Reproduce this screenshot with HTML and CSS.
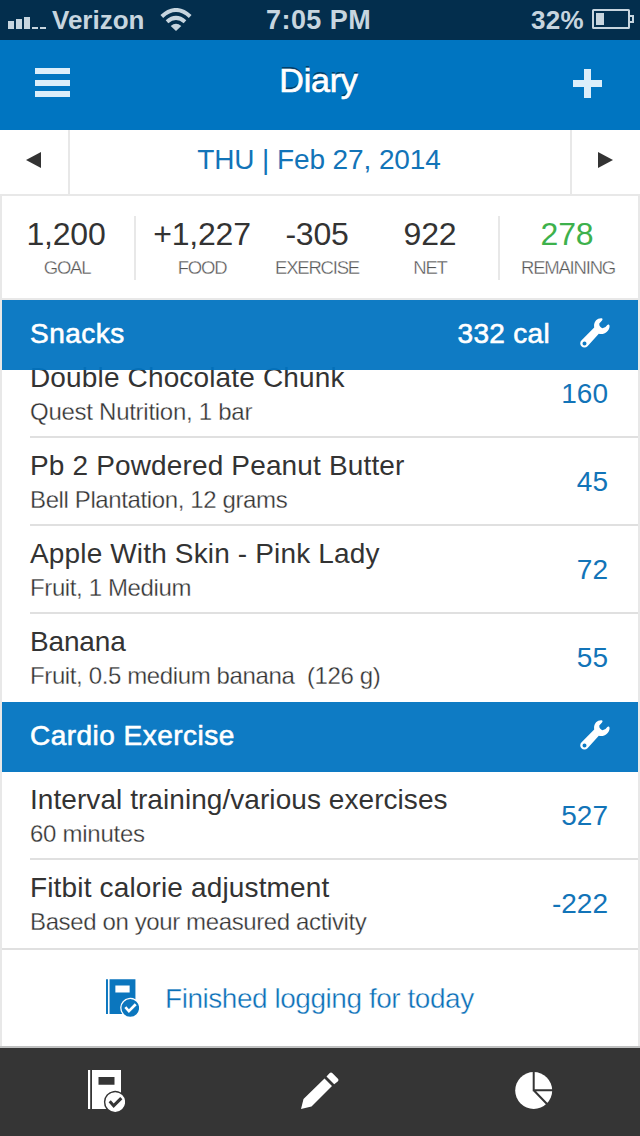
FILE: index.html
```html
<!DOCTYPE html>
<html lang="en">
<head>
<meta charset="utf-8">
<title>Diary</title>
<link rel="stylesheet" href="styles.css">
</head>
<body>
<svg class="defs" width="0" height="0">
  <defs>
    <symbol id="wrench" viewBox="0 0 30 30">
      <path fill-rule="evenodd" d="M21.500.3C17 0 13.300 4 14.200 9.500L1.600 22.300A4.210 4.210 0 1 0 7.500 28.300L18.800 15.700C23.800 17.200 29.600 13.500 29.600 8C29.600 6.300 28.200 5.900 27.300 7Q25.500 10.200 22.500 10.300Q19 9 19.300 5.600L21.800 2.800C22.800 1.800 22.800.4 21.500.3ZM4.500 23.400a2 2 0 1 1 0 4a2 2 0 1 1 0-4Z"/>
    </symbol>
    <symbol id="diary" viewBox="0 0 37 42">
      <path fill-rule="evenodd" d="M0 0H2.200V39H0ZM4 0H33V22.400A11.300 11.300 0 0 0 18.250 39H4ZM10.500 7V14.700H26.500V7Z"/>
      <path fill-rule="evenodd" d="M27.200 22.200a9.900 9.900 0 1 1 0 19.800a9.900 9.900 0 1 1 0-19.800ZM20.600 32.300L25.600 37.900L34.400 29.200L32.200 27L25.700 33.500L22.800 30.200Z"/>
    </symbol>
  </defs>
</svg>

<div class="status">
  <svg class="signal" width="38" height="13"><path d="M0 5h6v8H0zM8 3h6v10H8zM16 1h6v12h-6zM24 11h6v2h-6zM32 11h6v2h-6z"/></svg>
  <span class="carrier">Verizon</span>
  <svg class="wifi" width="32" height="24" viewBox="0 0 32 24"><path class="arc" d="M1.800 8.500Q16-4.500 30.200 8.500M7 13.700Q16 6 25 13.700"/><path d="M10.700 18Q16 13.300 21.300 18L16 23Z"/></svg>
  <span class="clock">7:05 PM</span>
  <span class="percent">32%</span>
  <svg class="battery" width="42" height="20"><path fill-rule="evenodd" d="M1.500 0H36.500Q38 0 38 1.500V6H42V14H38V18.500Q38 20 36.500 20H1.500Q0 20 0 18.500V1.500Q0 0 1.500 0ZM2 2V18H36V2ZM38 8V12H40V8ZM4 4H12V16H4Z"/></svg>
</div>

<header class="topbar">
  <svg class="menu" width="35" height="29"><path d="M0 0h35v6H0zM0 12h35v6H0zM0 23h35v6H0z"/></svg>
  <h1 class="title">Diary</h1>
  <svg class="add" width="29" height="29"><path d="M11 0h7v11h11v7H18v11h-7V18H0v-7h11z"/></svg>
</header>

<div class="date">
  <div class="step prev"><svg width="15" height="16"><path d="M0 8L15 0V16Z"/></svg></div>
  <div class="day"><span>THU | Feb 27, 2014</span></div>
  <div class="step next"><svg width="15" height="16"><path d="M15 8L0 0V16Z"/></svg></div>
</div>

<main class="page">
  <section class="summary">
    <div class="stat goal"><b>1,200</b><small>GOAL</small></div>
    <div class="stat food"><b>+1,227</b><small>FOOD</small></div>
    <div class="stat exercise"><b>-305</b><small>EXERCISE</small></div>
    <div class="stat net"><b>922</b><small>NET</small></div>
    <div class="stat remaining"><b>278</b><small>REMAINING</small></div>
  </section>

  <div class="section pinned"><h2>Snacks</h2><span class="total">332 cal</span><svg width="30" height="30"><use href="#wrench"/></svg></div>
  <ul class="list scrolled">
    <li><div><p class="name">Double Chocolate Chunk</p><p class="info loose">Quest Nutrition, 1 bar</p></div><span class="cal">160</span></li>
    <li><div><p class="name">Pb 2 Powdered Peanut Butter</p><p class="info">Bell Plantation, 12 grams</p></div><span class="cal">45</span></li>
    <li><div><p class="name">Apple With Skin - Pink Lady</p><p class="info">Fruit, 1 Medium</p></div><span class="cal">72</span></li>
    <li><div><p class="name tight">Banana</p><p class="info">Fruit, 0.5 medium banana&nbsp; (126 g)</p></div><span class="cal">55</span></li>
  </ul>

  <div class="section"><h2>Cardio Exercise</h2><svg width="30" height="30"><use href="#wrench"/></svg></div>
  <ul class="list">
    <li><div><p class="name even">Interval training/various exercises</p><p class="info loose">60 minutes</p></div><span class="cal">527</span></li>
    <li><div><p class="name">Fitbit calorie adjustment</p><p class="info">Based on your measured activity</p></div><span class="cal">-222</span></li>
  </ul>

  <div class="finish"><svg width="33" height="38"><use href="#diary"/></svg><span>Finished logging for today</span></div>
</main>

<nav class="tabs">
  <svg width="37" height="42"><use href="#diary"/></svg>
  <svg class="pencil" width="38" height="38" viewBox="0 0 38 38"><path d="M0 37L2.500 27L23.500 6.500L31 14L10.500 34.500ZM25.500 4.500L28.500 1.200Q30-.3 31.500 1.200L36.700 6.400Q38.200 7.900 36.700 9.400L33.200 12.300Z"/></svg>
  <svg class="pie" width="38" height="38" viewBox="0 0 38 38"><circle cx="18.700" cy="18.500" r="18.500"/><path class="cut" d="M18.700 0V18.200H38M18.700 18.200L32 32"/></svg>
</nav>
</body>
</html>
```
FILE: styles.css
```css
* { box-sizing: border-box; margin: 0; padding: 0; }
body { width: 640px; height: 1136px; overflow: hidden; display: flex; flex-direction: column; background: #fff; color: #333; font-family: "Liberation Sans", Arial, sans-serif; }
svg { display: block; flex: none; }
.defs { position: absolute; }
span, h1, h2, b, small, p { white-space: nowrap; }

.status { height: 40px; flex: none; display: flex; align-items: flex-start; padding-left: 8px; background: #032e4d; color: #c7d5df; fill: #c7d5df; font-size: 26px; font-weight: bold; line-height: 40px; }
.signal { margin-top: 16px; }
.carrier { width: 92px; margin-left: 6px; }
.wifi { margin: 8px 0 0 16px; }
.arc { fill: none; stroke: #c7d5df; stroke-width: 4; }
.clock { width: 105px; margin-left: 74px; font-size: 27px; letter-spacing: .45px; }
.percent { width: 53px; margin-left: 160px; letter-spacing: .3px; }
.battery { margin: 9px 0 0 8px; }

.topbar { height: 90px; flex: none; display: flex; justify-content: space-between; padding: 0 38px 0 35px; background: #0075c1; fill: #dceefa; }
.menu { margin-top: 28px; }
.add { margin-top: 29px; }
.title { margin-right: 6px; color: #fff; font-size: 34px; font-weight: 400; line-height: 80px; letter-spacing: -.2px; text-shadow: 0 -2px 0 #023f69; -webkit-text-stroke: .7px #fff; }

.date { height: 66px; flex: none; display: flex; border-bottom: 2px solid #e8e8e8; color: #1274b8; fill: #333; font-size: 28px; letter-spacing: -.1px; }
.step { width: 70px; padding-top: 22px; }
.prev { border-right: 2px solid #e8e8e8; padding-left: 26px; }
.next { border-left: 2px solid #e8e8e8; padding-left: 26px; }
.day { flex: 1; padding-right: 2px; text-align: center; line-height: 60px; }

.page { flex: none; height: 850px; border: solid #e8e8e8; border-width: 0 2px; }
.summary { height: 104px; display: flex; border-bottom: 2px solid #e8e8e8; padding: 20px 0; }
.stat { height: 64px; display: flex; flex-direction: column; align-items: center; }
.stat b { font-size: 32px; font-weight: 400; line-height: 36px; letter-spacing: -.2px; }
.stat small { font-size: 18.5px; line-height: 32px; letter-spacing: -1.2px; color: #555; -webkit-text-stroke: .35px #fff; }
.goal { width: 134px; padding-right: 2px; border-right: 2px solid #e8e8e8; }
.goal b { margin-left: -2px; }
.food { width: 132px; }
.exercise { width: 98px; }
.net { width: 134px; padding-right: 4px; border-right: 2px solid #e8e8e8; }
.remaining { width: 136px; }
.remaining b { color: #3db14c; margin-right: 2px; }

.section { height: 70px; display: flex; padding: 0 28px; background: #0e7bc4; color: #fff; fill: #fff; font-size: 28px; line-height: 68px; letter-spacing: .47px; -webkit-text-stroke: .6px #fff; }
.section svg { margin: 18px 0 0 auto; -webkit-text-stroke: 0; }
.section h2 { font-size: 28px; font-weight: 400; }
.pinned { position: relative; z-index: 1; background: rgba(2, 116, 193, .95); }
.total { margin-left: auto; letter-spacing: .3px; }
.section .total + svg { margin-left: 30px; }

.list { list-style: none; padding-left: 28px; }
.scrolled { margin-top: -20px; }
.list li { height: 88px; display: flex; justify-content: space-between; padding: 10px 30px 0 0; border-bottom: 2px solid #e0e0e0; }
.list li:last-child { border-bottom: 0; }
.name { padding-top: 1px; font-size: 28px; line-height: 34px; letter-spacing: .15px; }
.tight { letter-spacing: -.15px; }
.even { letter-spacing: .06px; }
.info { margin-top: 1px; font-size: 24px; line-height: 32px; letter-spacing: -.38px; color: #333; -webkit-text-stroke: .3px #fff; }
.loose { letter-spacing: -.27px; }
.cal { color: #1274b8; font-size: 28px; line-height: 68px; }

.finish { height: 98px; display: flex; padding: 29px 0 0 104px; border-top: 2px solid #e0e0e0; color: #0b70b8; fill: #0b76be; font-size: 28px; line-height: 40px; letter-spacing: -.46px; }
.finish span { margin-left: 26px; -webkit-text-stroke: .4px #fff; }

.tabs { height: 90px; flex: none; display: flex; align-items: flex-start; padding: 22px 88px 0; border-top: 2px solid #bfc0c0; background: #353535; fill: #fff; }
.pencil { margin: 2px 0 0 176px; }
.pie { margin: 2px 0 0 176px; }
.cut { fill: none; stroke: #353535; stroke-width: 2; }
```
